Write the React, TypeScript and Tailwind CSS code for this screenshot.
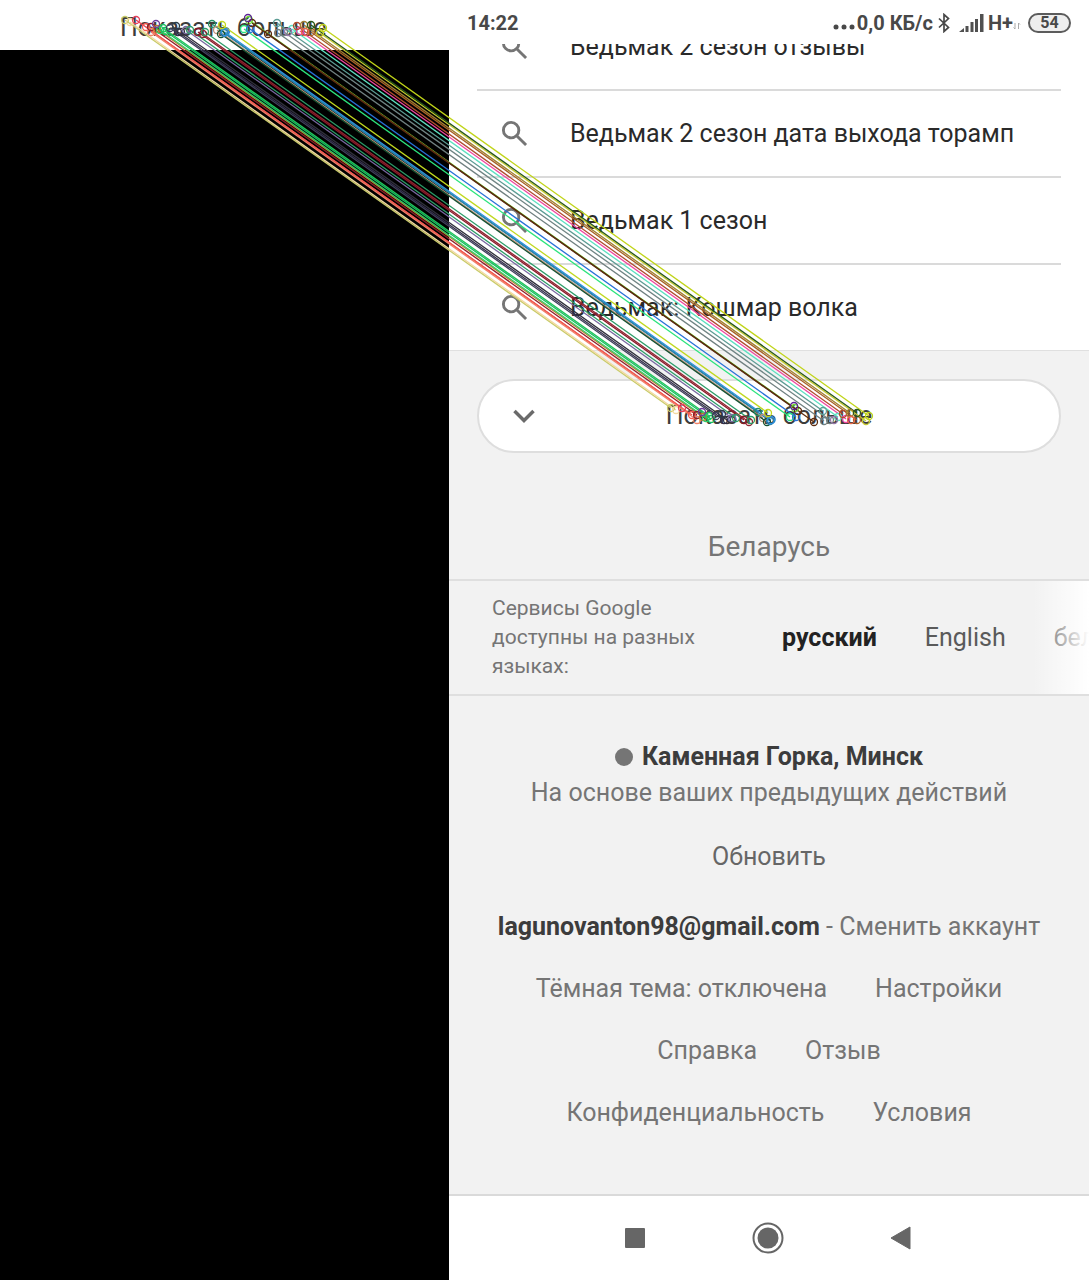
import React from 'react';

const suggestions = [
  'Ведьмак 2 сезон отзывы',
  'Ведьмак 2 сезон дата выхода торамп',
  'Ведьмак 1 сезон',
  'Ведьмак: Кошмар волка',
];

const matches: [number, number, string][] = [
  [125, 20, '#c8cc6a'],
  [130, 22, '#f3d9a0'],
  [136, 20, '#e8405a'],
  [146, 27, '#f4594e'],
  [151, 32, '#f08068'],
  [151, 27, '#8f1c28'],
  [157, 29, '#c07a2c'],
  [160, 30, '#2fd06a'],
  [163, 28, '#22c45c'],
  [165, 31, '#18c060'],
  [170, 28, '#40405c'],
  [178, 32, '#35304c'],
  [181, 32, '#30303c'],
  [186, 30, '#7868a0'],
  [190, 30, '#2c9c68'],
  [198, 32, '#8c1828'],
  [203, 34, '#902430'],
  [205, 32, '#2c9c68'],
  [212, 24, '#289068'],
  [217, 30, '#c09078'],
  [221, 34, '#145030'],
  [224, 33, '#2c80a8'],
  [225, 32, '#2c90e0'],
  [222, 25, '#c0d820'],
  [244, 29, '#2ce47c'],
  [250, 29, '#2870d8'],
  [249, 20, '#70dc38'],
  [268, 34, '#5c2c10'],
  [252, 23, '#5c2c10'],
  [278, 33, '#708080'],
  [284, 32, '#708484'],
  [277, 23, '#5c9c94'],
  [292, 29, '#5ce0c0'],
  [300, 31, '#f044a0'],
  [297, 26, '#b04c30'],
  [311, 32, '#a86028'],
  [304, 25, '#a08030'],
  [320, 33, '#c8cc30'],
  [311, 25, '#285818'],
  [323, 28, '#c0d418'],
];

const keypoints: [number, number, string][] = [
  [156, 24, '#6c3a9c'],
  [176, 26, '#2c3c48'],
  [248, 18, '#5c2494'],
  [288, 32, '#9878a8'],
  [305, 32, '#e86848'],
];

function Search() {
  return (
    <svg className="h-[27px] w-[27px] shrink-0" viewBox="0 0 28 28" fill="none" stroke="#757575" strokeWidth="3" aria-hidden="true">
      <circle cx="10.5" cy="10.5" r="8" />
      <path d="M16 16l10 10" />
    </svg>
  );
}

function StatusBar() {
  return (
    <header className="relative z-10 flex h-11 items-center bg-white pl-[18px] pr-[18px] pt-0.5 text-xl font-bold text-[#484848]">
      <time>14:22</time>
      <div className="ml-auto flex items-center">
        <svg className="mr-0.5 mt-2 h-2 w-[22px]" viewBox="0 0 22 8" fill="#484848" aria-hidden="true">
          <circle cx="3" cy="4" r="2.5" />
          <circle cx="11" cy="4" r="2.5" />
          <circle cx="19" cy="4" r="2.5" />
        </svg>
        <span>0,0 КБ/с</span>
        <svg className="ml-1 h-5 w-3.5" viewBox="0 0 14 20" fill="none" stroke="#484848" strokeWidth="1.7" aria-hidden="true">
          <path d="M2 5.5l9.500 9L7 18.500V1.500l4.500 4L2 14.500" />
        </svg>
        <svg className="ml-2 h-[18px] w-[25px]" viewBox="0 0 25 18" fill="#505050" aria-hidden="true">
          <path d="M0 18l5-4v4zM6.500 12h3v6h-3zM11.500 8h3v10h-3zM16 5h3v13h-3zM21 0h3.500v18H21z" />
        </svg>
        <span className="ml-1">H+</span>
        <svg className="mt-1.5 h-2 w-2" viewBox="0 0 8 8" fill="none" stroke="#aaaaaa" aria-hidden="true">
          <path d="M2 1v6L0.500 5.500M5.500 7V1L7 2.500" />
        </svg>
        <span className="ml-[7px] flex h-5 w-[43px] items-center justify-center rounded-full border-2 border-[#5c5c5c] bg-[#eeeeee] text-base">54</span>
      </div>
    </header>
  );
}

function MatchLines() {
  return (
    <svg className="pointer-events-none absolute left-0 top-0 z-20 h-[460px] w-[1089px]" viewBox="0 0 1089 460" fill="none" strokeWidth="1.3" aria-hidden="true">
      {matches.map(([x, y, color], i) => (
        <path key={i} stroke={color} d={`M${x} ${y}l546 388`} />
      ))}
      {[...matches, ...keypoints].map(([x, y, color], i) => (
        <g key={i} stroke={color}>
          <circle cx={x} cy={y} r="3.5" />
          <circle cx={x + 546} cy={y + 388} r="3.5" />
        </g>
      ))}
    </svg>
  );
}

export default function App() {
  return (
    <div className="relative flex min-h-screen overflow-hidden bg-black font-['Roboto',sans-serif]">
      <aside className="w-[449px] shrink-0">
        <div className="h-[50px] bg-white pl-[120px] pt-2.5 text-[25px] leading-9 text-[#3c3c3c]">Показать больше</div>
      </aside>

      <main className="flex min-w-0 flex-1 flex-col bg-[#f2f2f2] text-[25px] text-[#757575]">
        <StatusBar />
        <ul className="-mt-10 border-b border-[#e0e0e0] bg-white px-7">
          {suggestions.map((text) => (
            <li key={text} className="border-b-2 border-[#dadada] last:border-b-0">
              <a href="#" className="flex h-[85px] items-center gap-[42px] whitespace-nowrap pl-6 text-[#2a2a2a]">
                <Search />
                {text}
              </a>
            </li>
          ))}
        </ul>

        <button className="relative mx-7 mt-7 flex h-[74px] items-center justify-center rounded-full border-2 border-[#dedede] bg-white text-[#3c3c3c]">
          <svg className="absolute left-[34px] h-4 w-[22px]" viewBox="0 0 22 16" fill="none" stroke="#6a6a6a" strokeWidth="3.500" aria-hidden="true">
            <path d="M1.500 3l9.500 9.500L20.500 3" />
          </svg>
          Показать больше
        </button>

        <div className="mt-[76px] text-center text-[28px] leading-9">Беларусь</div>

        <section className="relative mt-[14px] flex h-[117px] items-center overflow-hidden whitespace-nowrap border-y-2 border-[#dfdfdf] pl-[43px]">
          <p className="w-[290px] shrink-0 text-[21px] leading-[29px]">
            Сервисы Google<br />доступны на разных<br />языках:
          </p>
          <nav className="flex gap-12 text-[#5a5a5a]">
            <a href="#" className="font-bold text-[#222222]">русский</a>
            <a href="#">English</a>
            <a href="#">беларуская</a>
          </nav>
          <div className="absolute inset-y-0 right-0 w-14 bg-linear-to-r from-white/0 to-white" />
        </section>

        <footer className="flex flex-1 flex-col items-center whitespace-nowrap pt-[43px] leading-9">
          <div className="flex items-center gap-[9px] font-bold text-[#3c3c3c]">
            <span className="h-[18px] w-[18px] rounded-full bg-[#757575]" />
            Каменная Горка, Минск
          </div>
          <div>На основе ваших предыдущих действий</div>
          <a href="#" className="mt-7 text-[#666666]">Обновить</a>
          <div className="mt-[34px]">
            <b className="text-[#3c3c3c]">lagunovanton98@gmail.com</b> - <a href="#">Сменить аккаунт</a>
          </div>
          <div className="mt-[26px] flex gap-12">
            <a href="#">Тёмная тема: отключена</a>
            <a href="#">Настройки</a>
          </div>
          <div className="mt-[26px] flex gap-12">
            <a href="#">Справка</a>
            <a href="#">Отзыв</a>
          </div>
          <div className="mt-[26px] flex gap-12">
            <a href="#">Конфиденциальность</a>
            <a href="#">Условия</a>
          </div>
        </footer>

        <nav className="flex h-[86px] items-center justify-center gap-[106px] border-t-2 border-[#dadada] bg-white pr-0.5">
          <button aria-label="Recent apps">
            <svg className="h-[22px] w-[22px]" viewBox="0 0 22 22" fill="#666666"><rect x="1" y="1" width="20" height="20" rx="1" /></svg>
          </button>
          <button aria-label="Home">
            <svg className="h-8 w-8" viewBox="0 0 32 32" fill="#666666"><circle cx="16" cy="16" r="10.500" /><circle cx="16" cy="16" r="14.500" fill="none" stroke="#666666" strokeWidth="2" /></svg>
          </button>
          <button aria-label="Back">
            <svg className="h-6 w-[22px]" viewBox="0 0 22 24" fill="#666666"><path d="M20 1v22L1 12z" stroke="#666666" strokeLinejoin="round" /></svg>
          </button>
        </nav>
      </main>
      <MatchLines />
    </div>
  );
}
